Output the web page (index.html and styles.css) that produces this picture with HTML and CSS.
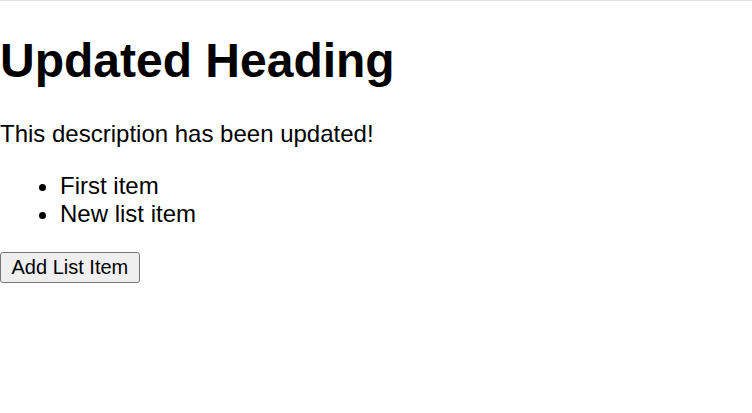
FILE: index.html
```html
<!DOCTYPE html>
<html>
<head>
<meta charset="utf-8">
<link rel="stylesheet" href="styles.css">
</head>
<body>
<h1 class="title">Updated Heading</h1>
<p class="desc">This description has been updated!</p>
<ul class="items">
  <li>First item</li>
  <li>New list item</li>
</ul>
<button class="add-btn">Add List Item</button>
</body>
</html>
```
FILE: styles.css
```css
html {
  background: #ffffff;
}
body {
  margin: 0;
  border-top: 1px solid #e2e2e2;
  font-family: "Liberation Sans", Arial, sans-serif;
  font-size: 24px;
  color: #000000;
}
.title {
  font-size: 48px;
  font-weight: bold;
  margin: 32px 0;
}
.desc {
  margin: 24px 0;
}
.items {
  margin: 24px 0;
  padding-left: 60px;
}
.add-btn {
  font-family: "Liberation Sans", Arial, sans-serif;
  font-size: 20px;
  color: #000000;
  background: #efefef;
  border: 1.5px solid #767676;
  border-radius: 3px;
  padding: 3px 10.5px;
  margin: 0;
}
```
